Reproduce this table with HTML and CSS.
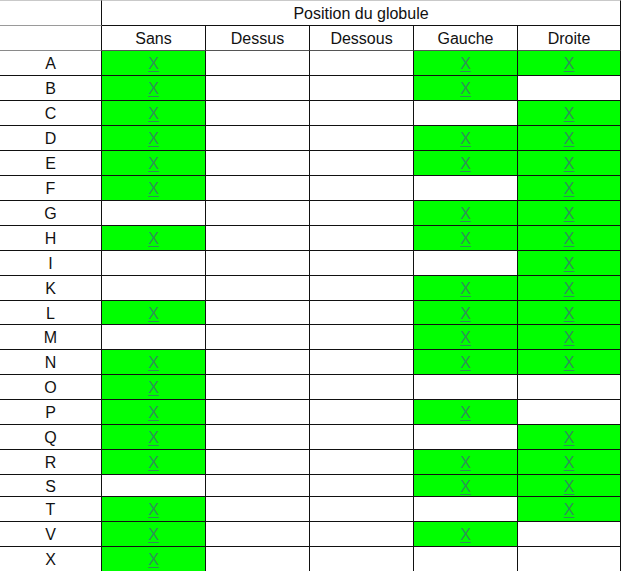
FILE: index.html
```html
<!DOCTYPE html>
<html lang="fr">
<head>
<meta charset="utf-8">
<title>Position du globule</title>
<link rel="stylesheet" href="styles.css">
</head>
<body>
<div class="sheet">
  <div class="c head-blank top"></div>
  <div class="c span top">Position du globule</div>

  <div class="c head-blank2"></div>
  <div class="c colh">Sans</div>
  <div class="c colh">Dessus</div>
  <div class="c colh">Dessous</div>
  <div class="c colh">Gauche</div>
  <div class="c colh">Droite</div>

  <div class="c lab">A</div><div class="c on"><u>X</u></div><div class="c"></div><div class="c"></div><div class="c on"><u>X</u></div><div class="c on"><u>X</u></div>
  <div class="c lab">B</div><div class="c on"><u>X</u></div><div class="c"></div><div class="c"></div><div class="c on"><u>X</u></div><div class="c"></div>
  <div class="c lab">C</div><div class="c on"><u>X</u></div><div class="c"></div><div class="c"></div><div class="c"></div><div class="c on"><u>X</u></div>
  <div class="c lab">D</div><div class="c on"><u>X</u></div><div class="c"></div><div class="c"></div><div class="c on"><u>X</u></div><div class="c on"><u>X</u></div>
  <div class="c lab">E</div><div class="c on"><u>X</u></div><div class="c"></div><div class="c"></div><div class="c on"><u>X</u></div><div class="c on"><u>X</u></div>
  <div class="c lab">F</div><div class="c on"><u>X</u></div><div class="c"></div><div class="c"></div><div class="c"></div><div class="c on"><u>X</u></div>
  <div class="c lab">G</div><div class="c"></div><div class="c"></div><div class="c"></div><div class="c on"><u>X</u></div><div class="c on"><u>X</u></div>
  <div class="c lab">H</div><div class="c on"><u>X</u></div><div class="c"></div><div class="c"></div><div class="c on"><u>X</u></div><div class="c on"><u>X</u></div>
  <div class="c lab">I</div><div class="c"></div><div class="c"></div><div class="c"></div><div class="c"></div><div class="c on"><u>X</u></div>
  <div class="c lab">K</div><div class="c"></div><div class="c"></div><div class="c"></div><div class="c on"><u>X</u></div><div class="c on"><u>X</u></div>
  <div class="c lab">L</div><div class="c on"><u>X</u></div><div class="c"></div><div class="c"></div><div class="c on"><u>X</u></div><div class="c on"><u>X</u></div>
  <div class="c lab">M</div><div class="c"></div><div class="c"></div><div class="c"></div><div class="c on"><u>X</u></div><div class="c on"><u>X</u></div>
  <div class="c lab">N</div><div class="c on"><u>X</u></div><div class="c"></div><div class="c"></div><div class="c on"><u>X</u></div><div class="c on"><u>X</u></div>
  <div class="c lab">O</div><div class="c on"><u>X</u></div><div class="c"></div><div class="c"></div><div class="c"></div><div class="c"></div>
  <div class="c lab">P</div><div class="c on"><u>X</u></div><div class="c"></div><div class="c"></div><div class="c on"><u>X</u></div><div class="c"></div>
  <div class="c lab">Q</div><div class="c on"><u>X</u></div><div class="c"></div><div class="c"></div><div class="c"></div><div class="c on"><u>X</u></div>
  <div class="c lab">R</div><div class="c on"><u>X</u></div><div class="c"></div><div class="c"></div><div class="c on"><u>X</u></div><div class="c on"><u>X</u></div>
  <div class="c lab">S</div><div class="c"></div><div class="c"></div><div class="c"></div><div class="c on"><u>X</u></div><div class="c on"><u>X</u></div>
  <div class="c lab">T</div><div class="c on"><u>X</u></div><div class="c"></div><div class="c"></div><div class="c"></div><div class="c on"><u>X</u></div>
  <div class="c lab">V</div><div class="c on"><u>X</u></div><div class="c"></div><div class="c"></div><div class="c on"><u>X</u></div><div class="c"></div>
  <div class="c lab">X</div><div class="c on"><u>X</u></div><div class="c"></div><div class="c"></div><div class="c"></div><div class="c"></div>
</div>
</body>
</html>
```
FILE: styles.css
```css
html, body {
  margin: 0;
  padding: 0;
  background: #ffffff;
}

body {
  font-family: "Liberation Sans", Arial, sans-serif;
  font-size: 16px;
  color: #111111;
  overflow: hidden;
}

.sheet {
  display: grid;
  grid-template-columns: 102px 104px 104px 104px 104px 103px;
  grid-template-rows: 26px 25px repeat(10, 25px) 24px repeat(6, 25px) 22px repeat(3, 25px);
  width: 621px;
}

.c {
  box-sizing: border-box;
  border-right: 1px solid #111111;
  border-bottom: 1px solid #111111;
  display: flex;
  align-items: center;
  justify-content: center;
  line-height: 1;
  background: #ffffff;
}

.top {
  border-top: 1px solid #c9c9c9;
}

.head-blank {
  border-bottom-color: #9a9a9a;
}

.span {
  grid-column: 2 / 7;
  padding-top: 1px;
}

.head-blank2 {
  border-bottom-color: #8a8a8a;
}

.colh {
  border-bottom-color: #555555;
  padding-top: 2px;
}

.lab {
  padding-top: 2px;
}

.on {
  background: #00ff00;
  padding-top: 2px;
}

.on u {
  color: #2f8f58;
  text-decoration-thickness: 1px;
  text-underline-offset: 2px;
}
```
